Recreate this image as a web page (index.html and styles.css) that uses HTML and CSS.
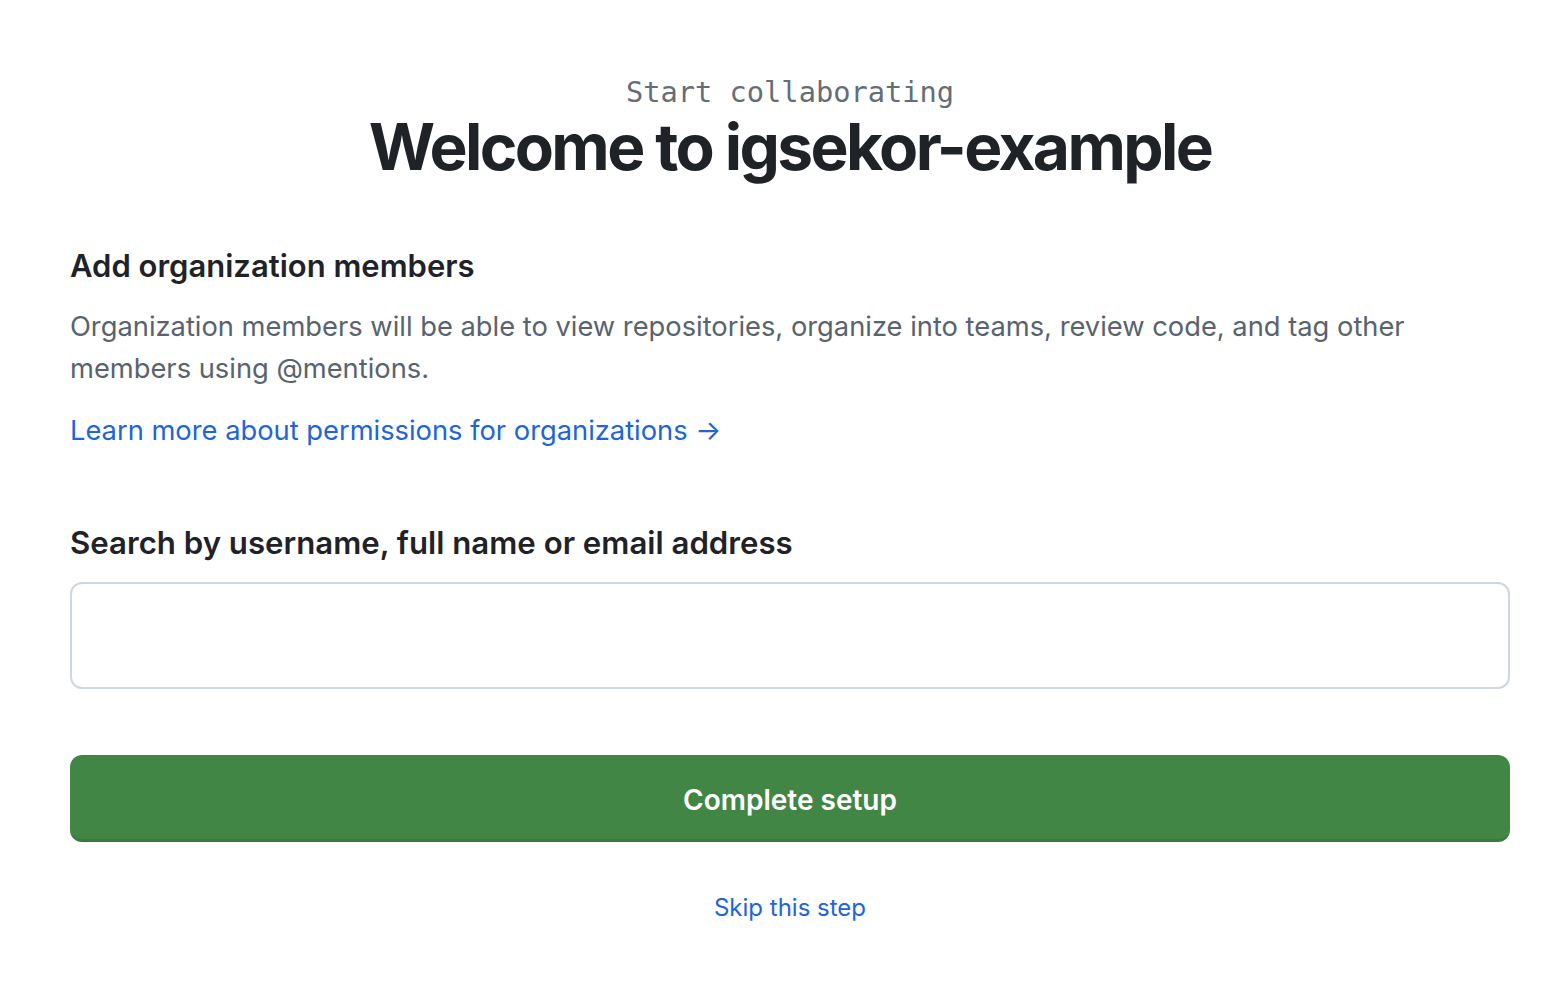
FILE: index.html
```html
<!DOCTYPE html>
<html lang="en">
<head>
<meta charset="utf-8">
<title>Welcome to igsekor-example</title>
<link rel="stylesheet" href="styles.css">
</head>
<body>
<main class="page">
  <header class="intro">
    <p class="eyebrow">Start collaborating</p>
    <h1 class="title">Welcome to igsekor-example</h1>
  </header>
  <section class="members">
    <h2 class="section-title">Add organization members</h2>
    <p class="description">Organization members will be able to view repositories, organize into teams, review code, and tag other members using @mentions.</p>
    <a class="learn-link" href="#">Learn more about permissions for organizations →</a>
  </section>
  <form class="invite" onsubmit="return false">
    <label class="field-label" for="search">Search by username, full name or email address</label>
    <input class="field-input" id="search" type="text">
    <button class="btn-primary" type="submit">Complete setup</button>
    <a class="skip-link" href="#">Skip this step</a>
  </form>
</main>
</body>
</html>
```
FILE: styles.css
```css
* { box-sizing: border-box; }
html, body { margin: 0; padding: 0; background: #ffffff; }
body {
  font-family: Inter, "Liberation Sans", Arial, sans-serif;
  color: #1f2328;
}
.page {
  display: flex;
  flex-direction: column;
  padding: 74px 54px 40px 70px;
}
.intro {
  display: flex;
  flex-direction: column;
  align-items: center;
}
.eyebrow {
  margin: 0;
  font-family: "DejaVu Sans Mono", "Liberation Mono", monospace;
  font-size: 28.7px;
  line-height: 37px;
  color: #656d76;
}
.title {
  margin: -2px 0 2px;
  font-size: 64px;
  line-height: 76px;
  font-weight: 700;
  letter-spacing: -2.6px;
  color: #1f2328;
}
.members {
  display: flex;
  flex-direction: column;
  margin-top: 58px;
}
.section-title {
  margin: 0;
  font-size: 31px;
  line-height: 42px;
  font-weight: 600;
}
.description {
  margin: 19px 0 0;
  font-size: 27.3px;
  line-height: 42px;
  color: #59636e;
  max-width: 1360px;
}
.learn-link {
  margin-top: 20px;
  font-size: 27.3px;
  line-height: 42px;
  color: #2065d8;
  text-decoration: none;
  align-self: flex-start;
}
.invite {
  display: flex;
  flex-direction: column;
  margin-top: 70px;
}
.field-label {
  font-size: 31.2px;
  line-height: 42px;
  font-weight: 600;
}
.field-input {
  margin-top: 18px;
  height: 107px;
  border: 2px solid #d0d7de;
  border-radius: 12px;
  background: #ffffff;
  font-size: 28px;
  padding: 0 24px;
}
.btn-primary {
  margin-top: 66px;
  height: 87px;
  padding: 6px 0 0;
  border: none;
  border-bottom: 3px solid #3a7a3e;
  border-radius: 12px;
  background: #428646;
  color: #ffffff;
  font-family: inherit;
  font-size: 28px;
  font-weight: 600;
}
.skip-link {
  margin-top: 50px;
  align-self: center;
  font-size: 24px;
  line-height: 32px;
  color: #2065d8;
  text-decoration: none;
}
```
